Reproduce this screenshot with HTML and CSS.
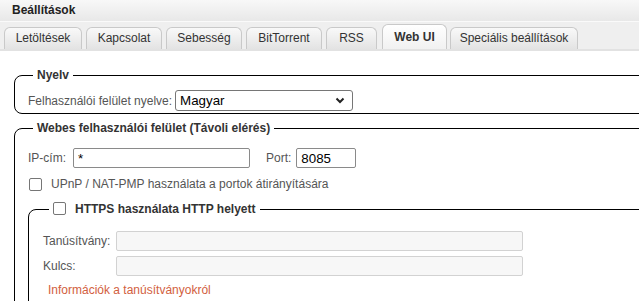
FILE: index.html
```html
<!DOCTYPE html>
<html lang="hu">
<head>
  <meta charset="UTF-8" />
  <meta name="viewport" content="width=device-width, initial-scale=1.0" />
  <title>Beállítások</title>
  <link rel="stylesheet" href="styles.css">
</head>
<body>

  <div class="window-title">Beállítások</div>

  <!-- Fülek -->
  <nav class="tabs">
    <a class="tab w-dl">Letöltések</a>
    <a class="tab w-76">Kapcsolat</a>
    <a class="tab w-76">Sebesség</a>
    <a class="tab w-76">BitTorrent</a>
    <a class="tab w-rss">RSS</a>
    <a class="tab w-webui active">Web UI</a>
    <a class="tab w-adv">Speciális beállítások</a>
  </nav>

  <div class="panel">
    <fieldset class="settings lang">
      <legend>Nyelv</legend>
      <div class="row">
        <label for="locale">Felhasználói felület nyelve:</label>
        <div class="select-wrap">
          <select id="locale">
            <option>Magyar</option>
          </select>
          <svg class="chevron" width="10" height="7" viewBox="0 0 10 7"><path d="M1.5 1.5L5 5l3.5-3.5" fill="none" stroke="#222" stroke-width="2"/></svg>
        </div>
      </div>
    </fieldset>

    <fieldset class="settings web">
      <legend>Webes felhasználói felület (Távoli elérés)</legend>
      <div class="row">
        <label for="addr">IP-cím:</label>
        <input type="text" id="addr" class="ip" value="*">
        <label for="port" class="port-label">Port:</label>
        <input type="text" id="port" class="port" value="8085">
      </div>
      <div class="row check-row">
        <input type="checkbox" id="upnp" class="check">
        <label for="upnp">UPnP / NAT-PMP használata a portok átirányítására</label>
      </div>

      <fieldset class="settings inner">
        <legend><input type="checkbox" id="https" class="check"><label for="https">HTTPS használata HTTP helyett</label></legend>
        <div class="cert-grid">
          <label>Tanúsítvány:</label>
          <input type="text" class="cert" disabled>
          <label>Kulcs:</label>
          <input type="text" class="cert" disabled>
        </div>
        <a class="info-link">Információk a tanúsítványokról</a>
      </fieldset>
    </fieldset>
  </div>

</body>
</html>
```

FILE: styles.css
```css
body {
  margin: 0;
  font-family: "Liberation Sans", Arial, sans-serif;
  font-size: 12px;
  color: #333;
  background: #fff;
  overflow: hidden;
}

.window-title {
  height: 21px;
  line-height: 20px;
  padding-left: 12px;
  font-weight: bold;
  color: #222;
  background: linear-gradient(#f8f8f8, #e8e8e8);
  border-bottom: 1px solid #fafafa;
}

/* fülek */
.tabs {
  display: flex;
  align-items: flex-end;
  gap: 4px;
  height: 27px;
  padding-left: 4px;
  background: #efefef;
  border-bottom: 2px solid #e2e2e2;
}

.tab {
  box-sizing: border-box;
  height: 22px;
  line-height: 21px;
  text-align: center;
  color: #333;
  border: 1px solid #c9c9c9;
  border-bottom: none;
  border-radius: 6px 6px 0 0;
  background: linear-gradient(#f9f9f9, #e3e3e3);
}

.tab.active {
  height: 25px;
  line-height: 25px;
  font-weight: bold;
  background: linear-gradient(#ffffff, #f1f1f1);
}

.w-dl { width: 78px; }
.w-76 { width: 76px; }
.w-rss { width: 51px; margin-right: 1px; }
.w-webui { width: 65px; margin-right: -1px; }
.w-adv { width: 128px; }

/* a mezőcsoportok jobbra és lefelé kilógnak, itt vágjuk le */
.panel {
  width: 625px;
  height: 250px;
  padding-left: 14px;
  overflow: hidden;
}

fieldset.settings {
  border: 1px solid #000;
  border-radius: 8px;
  margin: 0;
  min-width: 0;
  width: 700px;
}

fieldset.settings legend {
  padding: 0 4px;
  margin-left: 5px;
  line-height: 14px;
  font-weight: bold;
  color: #333;
}

.lang {
  margin-top: 17px !important;
  padding: 8px 0 2px 13px;
}

.row {
  display: flex;
  align-items: center;
  color: #555;
}

.select-wrap {
  position: relative;
  margin-left: 3px;
}

select {
  appearance: none;
  -webkit-appearance: none;
  box-sizing: border-box;
  width: 178px;
  height: 21px;
  padding: 0 4px;
  font-family: "Liberation Sans", Arial, sans-serif;
  font-size: 13.33px;
  color: #000;
  background: #fff;
  border: 1px solid #767676;
  border-radius: 3px;
}

.chevron {
  position: absolute;
  right: 8px;
  top: 7px;
  pointer-events: none;
}

.web {
  margin-top: 7px !important;
  padding: 13px 0 0 13px;
  height: 200px;
}

input[type="text"] {
  box-sizing: border-box;
  height: 20px;
  padding: 0 4px;
  font-family: "Liberation Sans", Arial, sans-serif;
  font-size: 13.33px;
  color: #000;
  border: 1px solid #8a8a8a;
  border-radius: 2px;
  outline: none;
}

.ip {
  width: 177px;
  margin-left: 7px;
}

.port-label {
  margin-left: 16px;
}

.port {
  width: 60px;
  margin-left: 5px;
}

.check {
  appearance: none;
  -webkit-appearance: none;
  box-sizing: border-box;
  width: 13px;
  height: 13px;
  margin: 0;
  border: 1px solid #767676;
  border-radius: 2px;
  background: #fff;
  vertical-align: -2px;
}

.check-row {
  margin-top: 8px;
  height: 16px;
}

.check-row .check {
  margin-left: 1px;
  margin-right: 9px;
}

.inner {
  width: 690px !important;
  margin-top: 9px !important;
  padding: 14px 0 0 14px;
  height: 120px;
}

.inner legend {
  margin-left: 6px !important;
  line-height: 16px !important;
}

.inner legend .check {
  margin-right: 9px;
}

.cert-grid {
  display: grid;
  grid-template-columns: 73px 407px;
  row-gap: 5px;
  align-items: center;
  color: #555;
}

.cert {
  width: 407px;
  background: #f7f7f7;
  border-color: #d2d2d2 !important;
}

.info-link {
  display: block;
  margin-top: 7px;
  margin-left: 5px;
  line-height: 14px;
  color: #d2603e;
}
```
